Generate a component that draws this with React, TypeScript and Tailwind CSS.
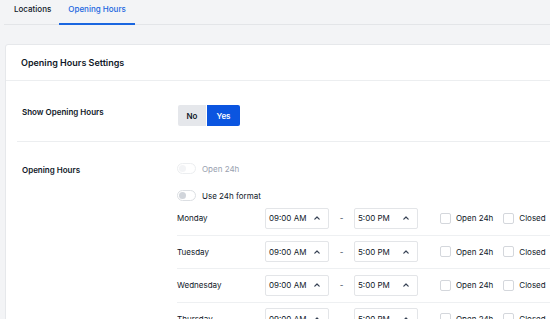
const days = ["Monday", "Tuesday", "Wednesday", "Thursday"];

function ChevronUp() {
  return (
    <svg width="8" height="8" viewBox="0 0 8 8" fill="none" className="text-gray-700">
      <path d="M1.8 5.2 L4 3 L6.2 5.2" stroke="currentColor" strokeWidth="1.2" strokeLinecap="round" strokeLinejoin="round" />
    </svg>
  );
}

function TimeInput({ value }: { value: string }) {
  return (
    <div className="flex h-[21px] w-[64px] items-center justify-between rounded-[2px] border border-[#e3e5e8] bg-white pl-[3px] pr-[7px] text-[8px] text-gray-900">
      <span>{value}</span>
      <ChevronUp />
    </div>
  );
}

function Checkbox({ label }: { label: string }) {
  return (
    <label className="flex items-center gap-[5px] text-[8px] text-gray-900">
      <span className="h-[11px] w-[11px] rounded-[2px] border border-[#d4d7dc] bg-white" />
      {label}
    </label>
  );
}

function Toggle({ label, faded }: { label: string; faded?: boolean }) {
  return (
    <div className="flex h-[13px] items-center gap-[6px]">
      <span
        className={
          faded
            ? "flex h-[11px] w-[19px] items-center rounded-full border border-[#eceef0] px-[1px]"
            : "flex h-[11px] w-[19px] items-center rounded-full border border-[#dcdfe3] px-[1px]"
        }
      >
        <span className={faded ? "h-[7px] w-[7px] rounded-full bg-[#f3f4f6]" : "h-[7px] w-[7px] rounded-full bg-[#d1d5db]"} />
      </span>
      <span className={faded ? "text-[8px] text-gray-400" : "text-[8px] text-gray-900"}>{label}</span>
    </div>
  );
}

export default function App() {
  return (
    <div className="h-[319px] w-[550px] overflow-hidden bg-[#f3f4f6] font-['Inter',sans-serif]">
      {/* tabs */}
      <div className="ml-[4px] flex h-[25px] border-b border-[#e3e5e8]">
        <div className="pl-[10px] pr-[8px] pt-[3px] text-[8px] font-medium leading-[12px] text-gray-900">Locations</div>
        <div className="-mb-px border-b-2 border-[#1a66e0] px-[9px] pt-[3px] text-[8px] font-medium leading-[12px] text-[#1a66e0]">
          Opening Hours
        </div>
      </div>

      {/* card */}
      <div className="ml-[5px] mt-[19px] w-[600px] rounded-[3px] border border-[#e6e8eb] bg-white">
        <div className="flex h-[36px] items-center border-b border-[#eceef0] px-[15px] text-[9px] font-semibold text-gray-900">
          Opening Hours Settings
        </div>

        <div className="mx-[11px] flex h-[61px] border-b border-[#eceef0] pt-[24px]">
          <div className="w-[161px] pl-[5px] pt-[1px] text-[8px] font-semibold leading-[12px] text-gray-900">
            Show Opening Hours
          </div>
          <div className="flex h-[21px] gap-px">
            <button className="w-[28px] rounded-l-[2px] bg-[#e5e7eb] text-[8px] font-semibold text-gray-900">No</button>
            <button className="w-[33px] rounded-r-[2px] bg-[#0b55e0] text-[8px] font-semibold text-white">Yes</button>
          </div>
        </div>

        <div className="mx-[11px] flex pt-[20px]">
          <div className="w-[160px] pl-[5px] pt-[2px] text-[8px] font-semibold leading-[12px] text-gray-900">
            Opening Hours
          </div>
          <div className="flex flex-1 flex-col">
            <div className="flex flex-col gap-[14px]">
              <Toggle label="Open 24h" faded />
              <Toggle label="Use 24h format" />
            </div>
            <div className="flex flex-col">
              {days.map((d) => (
                <div key={d} className="flex h-[33.5px] items-center border-b border-[#eef0f2]">
                  <div className="w-[88px] text-[8px] text-gray-900">{d}</div>
                  <TimeInput value="09:00 AM" />
                  <div className="w-[25px] text-center text-[8px] text-gray-700">-</div>
                  <TimeInput value="5:00 PM" />
                  <div className="ml-[22px] flex gap-[10px]">
                    <Checkbox label="Open 24h" />
                    <Checkbox label="Closed" />
                  </div>
                </div>
              ))}
            </div>
          </div>
        </div>
      </div>
    </div>
  );
}
